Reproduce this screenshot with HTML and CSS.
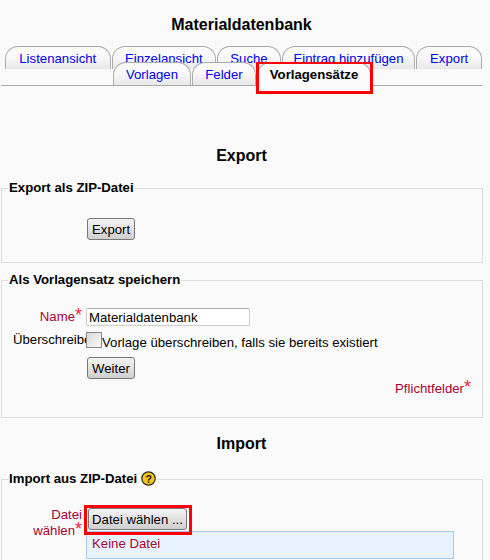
FILE: index.html
```html
<!DOCTYPE html>
<html>
<head>
  <title>Materialdatenbank</title>
  <link rel="stylesheet" href="styles.css">
</head>
<body>

  <div id="page">

    <h2 class="main_title">Materialdatenbank</h2>

    <div class="tabs">
      <div class="tab_row first">
        <a class="tab w_liste">Listenansicht</a>
        <a class="tab w_einzel">Einzelansicht</a>
        <a class="tab w_suche">Suche</a>
        <a class="tab w_eintrag">Eintrag hinzufügen</a>
        <a class="tab w_export">Export</a>
      </div>
      <div class="tab_row second">
        <a class="tab w_vorlagen">Vorlagen</a>
        <a class="tab w_felder">Felder</a>
        <a class="tab w_saetze active">Vorlagensätze</a>
      </div>
    </div>

    <h2 class="section_title export_title">Export</h2>

    <fieldset class="box box_export">
      <legend>Export als ZIP-Datei</legend>
      <div class="row">
        <div class="label"></div>
        <div class="field"><button class="btn">Export</button></div>
      </div>
    </fieldset>

    <fieldset class="box box_save">
      <legend>Als Vorlagensatz speichern</legend>
      <div class="row row_name">
        <div class="label required">Name<span class="star">*</span></div>
        <div class="field"><input class="text" type="text" value="Materialdatenbank"></div>
      </div>
      <div class="row row_check">
        <div class="label overflowing">Überschreiben</div>
        <div class="field check_field">
          <span class="check"></span>
          <span class="check_text">Vorlage überschreiben, falls sie bereits existiert</span>
        </div>
      </div>
      <div class="row row_next">
        <div class="label"></div>
        <div class="field"><button class="btn">Weiter</button></div>
      </div>
      <div class="required_note">Pflichtfelder<span class="star">*</span></div>
    </fieldset>

    <h2 class="section_title import_title">Import</h2>

    <fieldset class="box box_import">
      <legend>Import aus ZIP-Datei
        <svg class="help" width="15" height="15" viewBox="0 0 15 15">
          <circle cx="7.5" cy="7.5" r="6.7" fill="#f7c521" stroke="#2e2a1a" stroke-width="1.2"/>
          <text x="7.5" y="11.5" text-anchor="middle" class="help_mark">?</text>
        </svg>
      </legend>
      <div class="row">
        <div class="label required file_label">Datei wählen<span class="star">*</span></div>
        <div class="field">
          <button class="btn file_btn">Datei wählen ...</button>
          <div class="file_name">Keine Datei</div>
        </div>
      </div>
    </fieldset>

    <!-- red markers from the screenshot -->
    <div class="marker marker_tab"></div>
    <div class="marker marker_file"></div>

  </div>

</body>
</html>
```

FILE: styles.css
```css
html, body {
  margin: 0;
  height: 560px;
  overflow: hidden;
}

body {
  background-color: #fafafa;
  color: #000;
  font-size: 13.2px;
  font-family: "Liberation Sans", Arial, sans-serif;
}

#page {
  position: relative;
  width: 490px;
  height: 560px;
  overflow: hidden;
}

.main_title, .section_title {
  margin: 0;
  font-size: 16px;
  line-height: 18px;
  font-weight: bold;
  text-align: center;
}

.main_title {
  width: 483px;
  padding-top: 16px;
}

.tabs {
  width: 481px;
  margin: 12px 0 0 1px;
  height: 39px;
  border-bottom: 1px solid #aaa;
}

.tab_row {
  display: flex;
  gap: 1px;
  height: 23px;
}

.tab_row.first {
  padding-left: 4px;
}

.tab_row.second {
  margin-top: -7px;
  padding-left: 112px;
  position: relative;
}

.tab {
  box-sizing: border-box;
  height: 23px;
  padding-top: 3px;
  border: 1px solid #aaa;
  border-bottom: 0;
  border-radius: 13px 13px 0 0;
  background: linear-gradient(to bottom, #fafafa 40%, #e8e8e8 100%);
  color: #0000ee;
  line-height: 18px;
  text-align: center;
}

.tab.active {
  background: #fafafa;
  color: #000;
  font-weight: bold;
  height: 24px;
}

.w_liste { width: 106px; }
.w_einzel { width: 105px; }
.w_suche { width: 64px; }
.w_eintrag { width: 134px; }
.w_export { width: 66px; }
.w_vorlagen { width: 78px; }
.w_felder { width: 64px; }
.w_saetze { width: 114px; }

.export_title {
  width: 483px;
  padding-top: 61px;
}

.import_title {
  width: 483px;
  padding-top: 17px;
}

.box {
  box-sizing: border-box;
  width: 482px;
  margin: 0 0 0 1px;
  padding: 0;
  border: 1px solid #ddd;
  min-width: 0;
}

.box legend {
  margin-left: 6px;
  padding: 0 1px;
  font-weight: bold;
  font-size: 13.2px;
  line-height: 16px;
}

.box_export {
  height: 83px;
  margin-top: 15px;
  margin-bottom: 9px;
}

.box_export .row {
  padding-top: 22px;
}

.box_save {
  height: 146px;
}

.box_import {
  height: 120px;
  margin-top: 18px;
}

.row {
  display: flex;
}

.label {
  width: 80px;
  flex: none;
  text-align: right;
  line-height: 16px;
  color: #000;
}

.label.required, .required_note {
  color: #aa0033;
}

.label.overflowing {
  white-space: nowrap;
  text-align: left;
  box-sizing: border-box;
  padding-left: 11px;
}

.star {
  color: #ff2040;
  font-size: 18px;
  line-height: 0;
}

.field {
  margin-left: 4px;
}

.row_name {
  padding-top: 20px;
  height: 22px;
}

.row_name .label {
  padding-top: 1px;
}

.row_check {
  padding-top: 2px;
  height: 22px;
}

.row_next {
  padding-top: 3px;
}

.text {
  box-sizing: border-box;
  display: block;
  width: 164px;
  height: 18px;
  margin: 0;
  padding: 0 2px;
  border: 1px solid #ccc;
  border-top-color: #aaa;
  border-radius: 2px;
  background: #fff;
  color: #000;
  font-size: 13.2px;
  font-family: "Liberation Sans", Arial, sans-serif;
}

.check_field {
  display: flex;
}

.check {
  position: relative;
  box-sizing: border-box;
  display: block;
  width: 16px;
  height: 16px;
  border: 1px solid #888;
  background: linear-gradient(135deg, #d8d8d8, #fafafa);
}

.check_text {
  line-height: 16px;
  padding-top: 3px;
  white-space: nowrap;
}

.btn {
  box-sizing: border-box;
  display: block;
  height: 22px;
  margin: 0 0 0 1px;
  padding: 0 4px;
  border: 1px solid #777;
  border-radius: 3px;
  background: linear-gradient(to bottom, #f4f4f4, #cfcfcf);
  color: #000;
  font-size: 13.2px;
  font-family: "Liberation Sans", Arial, sans-serif;
}

.required_note {
  text-align: right;
  padding-right: 11px;
  line-height: 16px;
  margin-top: 2px;
}

.help {
  vertical-align: -3px;
}

.help_mark {
  font-size: 11px;
  font-weight: bold;
  fill: #222;
}

.box_import .row {
  padding-top: 21px;
}

.file_label {
  margin-top: -1px;
}

.file_btn {
  width: 99px;
  margin-left: 2px;
  padding: 0;
  white-space: nowrap;
  text-align: center;
}

.file_name {
  box-sizing: border-box;
  width: 368px;
  height: 28px;
  margin-top: 1px;
  padding: 4px 5px;
  border: 1px solid #a8c8e8;
  background: #e8f3ff;
  color: #aa0033;
  line-height: 16px;
}

.marker {
  position: absolute;
  box-sizing: border-box;
  border: 3px solid #f00;
}

.marker_tab {
  left: 256px;
  top: 62px;
  width: 117px;
  height: 32px;
  border-top-width: 2px;
}

.marker_file {
  left: 84px;
  top: 505px;
  width: 108px;
  height: 30px;
}
```
